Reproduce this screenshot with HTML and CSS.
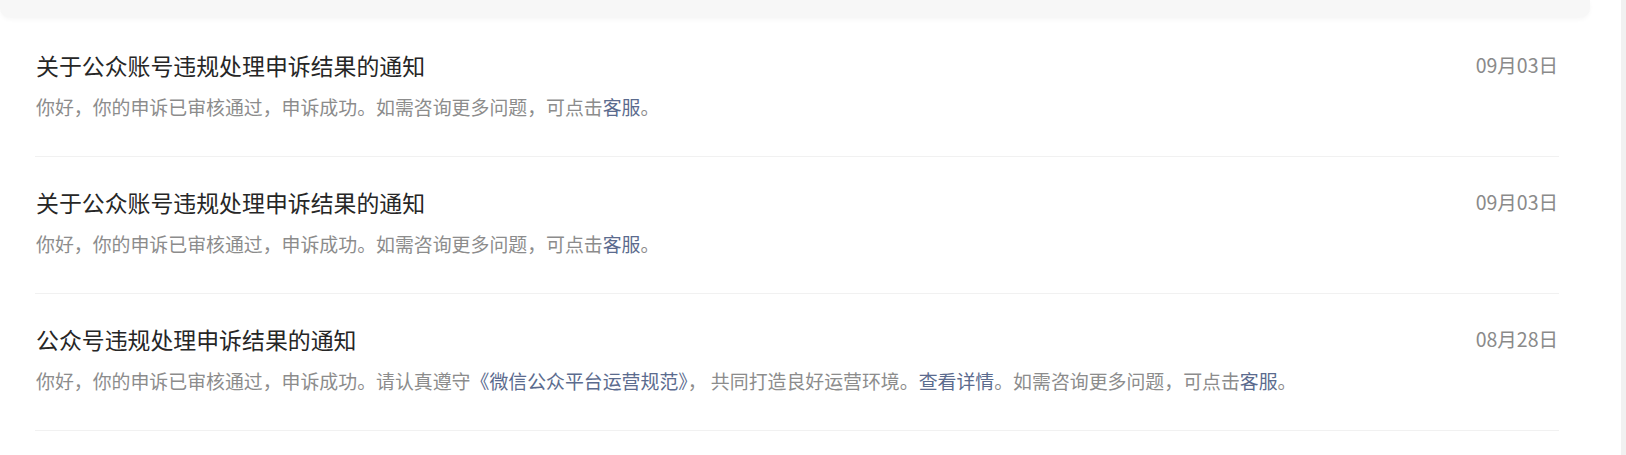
FILE: index.html
```html
<!DOCTYPE html>
<html lang="zh-CN">
<head>
<meta charset="utf-8">
<title>通知</title>
<link rel="stylesheet" href="styles.css">
</head>
<body>
<div class="page">
  <div class="main">
    <div class="prev-card"></div>
    <ul class="notice-list">
      <li class="notice">
        <div class="notice-body">
          <div class="notice-title">关于公众账号违规处理申诉结果的通知</div>
          <div class="notice-desc">你好，你的申诉已审核通过，申诉成功。如需咨询更多问题，可点击<a class="link">客服</a>。</div>
        </div>
        <div class="notice-date">09月03日</div>
      </li>
      <li class="notice">
        <div class="notice-body">
          <div class="notice-title">关于公众账号违规处理申诉结果的通知</div>
          <div class="notice-desc">你好，你的申诉已审核通过，申诉成功。如需咨询更多问题，可点击<a class="link">客服</a>。</div>
        </div>
        <div class="notice-date">09月03日</div>
      </li>
      <li class="notice">
        <div class="notice-body">
          <div class="notice-title">公众号违规处理申诉结果的通知</div>
          <div class="notice-desc">你好，你的申诉已审核通过，申诉成功。请认真遵守<a class="link">《微信公众平台运营规范》</a>， 共同打造良好运营环境。<a class="link">查看详情</a>。如需咨询更多问题，可点击<a class="link">客服</a>。</div>
        </div>
        <div class="notice-date">08月28日</div>
      </li>
    </ul>
  </div>
  <div class="scroll-track"></div>
</div>
</body>
</html>
```

FILE: styles.css
```css
html, body {
  margin: 0;
  padding: 0;
  background: #ffffff;
}

body {
  font-family: "Microsoft YaHei", "Noto Sans CJK SC", "Noto Sans", sans-serif;
  height: 455px;
  overflow: hidden;
}

.page {
  display: flex;
  height: 455px;
}

.main {
  flex: 1;
  min-width: 0;
}

.scroll-track {
  width: 5px;
  background: #f1f1f1;
}

.prev-card {
  height: 18px;
  margin: 0 31px 2px 0;
  background: #f7f7f7;
  border-radius: 0 0 10px 10px;
  box-shadow: 0 2px 4px rgba(0, 0, 0, 0.03);
}

.notice-list {
  list-style: none;
  margin: 0;
  padding: 0 62px 0 35px;
}

.notice {
  display: flex;
  align-items: flex-start;
  justify-content: space-between;
  padding: 30px 1px 35px 1px;
  border-bottom: 1px solid #f1f1f1;
}

.notice-title {
  font-size: 22.9px;
  line-height: 30px;
  color: #262626;
}

.notice-desc {
  margin-top: 13px;
  font-size: 18.9px;
  line-height: 28px;
  color: #8c8c8c;
}

.link {
  color: #5b6b8e;
  text-decoration: none;
}

.notice-date {
  font-size: 19.5px;
  line-height: 30px;
  color: #8a8a8a;
  white-space: nowrap;
}
```
